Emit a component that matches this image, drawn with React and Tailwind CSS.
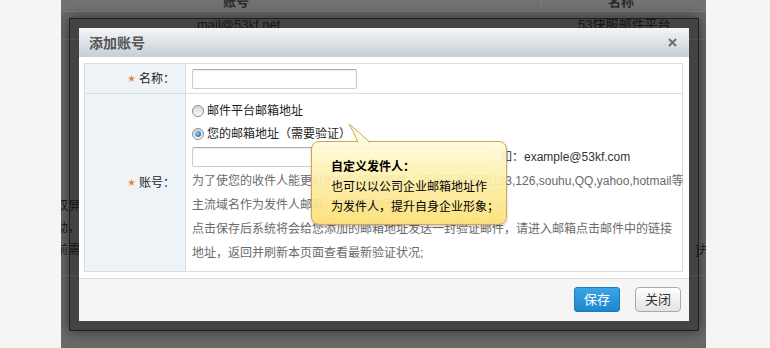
import React from 'react';

const Star = () => (
    <svg width="7" height="7" viewBox="0 0 10 10" className="mr-[4px]">
        <path d="M5 0.5 L6.2 3.6 L9.5 3.8 L7 6 L7.9 9.4 L5 7.6 L2.1 9.4 L3 6 L0.5 3.8 L3.8 3.6 Z" fill="#e27b37" stroke="#f3b27c" strokeWidth="0.6" />
    </svg>
);

const Radio = ({ checked }) => (
    <span className="w-[12px] h-[12px] rounded-full border border-[#8c8c8c] bg-gradient-to-b from-[#d4d4d4] to-[#fbfbfb] flex items-center justify-center mr-[3px] shrink-0">
        {checked && <span className="w-[6px] h-[6px] rounded-full bg-[radial-gradient(circle_at_35%_35%,#8fd0f7,#0a5597)]" />}
    </span>
);

const App = () => {
    return (
        <div className="relative w-[770px] h-[348px] flex bg-[#f5f5f5] overflow-hidden font-['Liberation_Sans','Noto_Sans_CJK_SC',sans-serif]">
            <div className="w-[61px] shrink-0" />

            {/* masked page behind the dialog */}
            <div className="relative w-[645px] h-full bg-[#6a6a6a] overflow-hidden">
                <div className="flex h-[12px] bg-[#737373] border-b border-[#7e7e7e] overflow-hidden text-[13px] font-bold text-[#2b2b2b] leading-[12px]">
                    <div className="w-[481px] pl-[162px] -mt-[4px] border-r border-[#7e7e7e]">账号</div>
                    <div className="pl-[66px] -mt-[4px]">名称</div>
                </div>
                <div className="flex h-[28px] border-b border-[#777] text-[13px] text-[#222] leading-[16px] pt-[5px]">
                    <div className="w-[481px] pl-[136px]">mail@53kf.net</div>
                    <div className="pl-[36px]">53快服邮件平台</div>
                </div>
                <div className="mt-[155px] flex justify-between text-[12px] text-[#1e1e1e] leading-[22px]">
                    <div className="-ml-[5px] flex flex-col">
                        <span>双屏</span>
                        <span>动，</span>
                        <span>前需</span>
                    </div>
                    <div className="flex flex-col pt-[44px]">
                        <span className="-mr-[5px]">]并</span>
                    </div>
                </div>
                <div className="mt-[14px] border-t border-[#7a7a7a]" />

                {/* dialog frame */}
                <div className="absolute left-[8px] top-[18px] w-[630px] h-[313px] bg-[rgba(0,0,0,0.36)] border border-[#1f1f1f] shadow-[0_0_14px_rgba(0,0,0,0.55)] p-[9px]">
                    <div className="w-[610px] h-[293px] flex flex-col bg-white">
                        <div className="h-[29px] shrink-0 flex items-center justify-between pl-[10px] pr-[12px] bg-gradient-to-b from-[#f3f6f8] to-[#c6cfd6]">
                            <span className="text-[14px] font-bold text-[#555] font-['Noto_Sans_CJK_SC',sans-serif]">添加账号</span>
                            <svg width="9" height="9" viewBox="0 0 9 9">
                                <path d="M1 1 L8 8 M8 1 L1 8" stroke="#6b6b6b" strokeWidth="1.8" />
                            </svg>
                        </div>

                        <div className="pt-[6px] pb-[6px] pl-[5px] pr-[6px]">
                            <div className="border border-[#ddd] text-[12px]">
                                <div className="flex h-[30px] border-b border-[#ddd]">
                                    <div className="w-[101px] shrink-0 bg-[#eef3f8] border-r border-[#ddd] flex items-center justify-end pr-[10px] text-[#222]">
                                        <Star />
                                        <span>名称：</span>
                                    </div>
                                    <div className="flex items-center pl-[6px]">
                                        <div className="w-[165px] h-[20px] border border-[#ccc] border-t-[#aaa] rounded-[2px] shadow-[inset_0_1px_2px_rgba(0,0,0,0.08)]" />
                                    </div>
                                </div>
                                <div className="flex h-[177px]">
                                    <div className="w-[101px] shrink-0 bg-[#eef3f8] border-r border-[#ddd] flex items-center justify-end pr-[10px] text-[#222]">
                                        <Star />
                                        <span>账号：</span>
                                    </div>
                                    <div className="flex flex-col pl-[6px] pt-[5px]">
                                        <div className="flex items-center h-[23px] text-[#222]">
                                            <Radio />
                                            <span>邮件平台邮箱地址</span>
                                        </div>
                                        <div className="flex items-center h-[23px] text-[#222]">
                                            <Radio checked />
                                            <span>您的邮箱地址（需要验证）</span>
                                        </div>
                                        <div className="flex items-center mt-[2px] gap-[8px]">
                                            <div className="w-[300px] h-[20px] border border-[#ccc] border-t-[#aaa] rounded-[2px] shadow-[inset_0_1px_2px_rgba(0,0,0,0.08)]" />
                                            <span className="text-[#333] text-[12px]">如：example@53kf.com</span>
                                        </div>
                                        <div className="mt-[2px] leading-[24px] text-[#6a6a6a] whitespace-nowrap">
                                            <div>为了使您的收件人能更好的识别您的邮件，建议不要使用163,126,souhu,QQ,yahoo,hotmail等</div>
                                            <div>主流域名作为发件人邮箱，这样更加专业；</div>
                                            <div>点击保存后系统将会给您添加的邮箱地址发送一封验证邮件，请进入邮箱点击邮件中的链接</div>
                                            <div>地址，返回并刷新本页面查看最新验证状况;</div>
                                        </div>
                                    </div>
                                </div>
                            </div>
                        </div>

                        <div className="flex-1 border-t border-[#ddd] bg-[#f5f5f5] flex justify-end items-start pt-[8px] pr-[8px] gap-[15px] text-[13px]">
                            <button className="w-[46px] h-[25px] rounded-[3px] border border-[#1c79b8] bg-gradient-to-b from-[#3aa5e6] to-[#1e86cc] text-white leading-none">保存</button>
                            <button className="w-[46px] h-[25px] rounded-[4px] border border-[#aaa] bg-gradient-to-b from-[#ffffff] to-[#e2e2e2] text-[#333] leading-none">关闭</button>
                        </div>
                    </div>
                </div>
            </div>

            <div className="flex-1" />

            {/* tooltip */}
            <div className="absolute left-[311px] top-[141px] w-[196px] h-[84px] rounded-[8px] border border-[#d2a35b] bg-[linear-gradient(to_bottom,rgba(255,252,220,0.93),rgba(253,236,160,0.93)_55%,rgba(252,223,120,0.95))] shadow-[0_2px_3px_rgba(0,0,0,0.18)] pl-[19px] pt-[14px] text-[12px] leading-[20px] text-black whitespace-nowrap font-['Noto_Sans_CJK_SC',sans-serif]">
                <div className="font-bold">自定义发件人：</div>
                <div>也可以以公司企业邮箱地址作</div>
                <div>为发件人，提升自身企业形象；</div>
            </div>
            <svg className="absolute left-[345px] top-[122px]" width="30" height="23" viewBox="0 0 30 23">
                <path d="M13 23 L13 21 Q9 10 4 2 Q14 10 25 21 L25 23 Z" fill="#fffcdd" stroke="none" />
                <path d="M13 20.5 Q9 10 4 2 Q14 10 25 20.5" fill="none" stroke="#d2a35b" strokeWidth="1" />
            </svg>
        </div>
    );
};

export default App;
